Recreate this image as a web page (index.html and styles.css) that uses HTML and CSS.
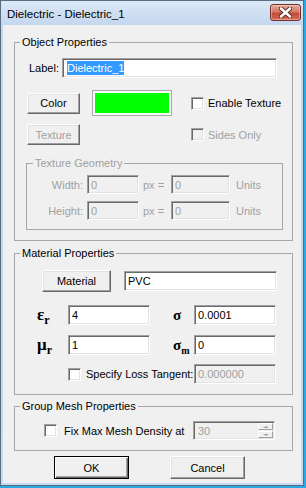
FILE: index.html
```html
<!DOCTYPE html>
<html lang="en">
<head>
  <meta charset="UTF-8" />
  <title>Dielectric - Dielectric_1</title>
  <link rel="stylesheet" href="styles.css">
</head>
<body>
  <div class="window">
    <div class="titlebar">
      <span class="title">Dielectric - Dielectric_1</span>
      <button class="close" aria-label="Close">
        <svg width="13" height="11" viewBox="0 0 13 11">
          <path d="M2 1.5 L11 9.5 M11 1.5 L2 9.5" stroke="#5a231c" stroke-width="4.4" stroke-linecap="round"/>
          <path d="M2 1.5 L11 9.5 M11 1.5 L2 9.5" stroke="#fff" stroke-width="2.6" stroke-linecap="round"/>
        </svg>
      </button>
    </div>

    <div class="client">
      <fieldset class="group">
        <legend>Object Properties</legend>
        <div class="label-row">
          <span class="label-text">Label:</span>
          <div class="field label-field"><span class="sel">Dielectric_1</span></div>
        </div>

        <div class="tex-grid">
          <button class="btn">Color</button>
          <div class="swatch"><div class="swatch-fill"></div></div>
          <label class="check"><input type="checkbox">Enable Texture</label>
          <button class="btn" disabled>Texture</button>
          <span></span>
          <label class="check disabled"><input type="checkbox" disabled>Sides Only</label>
        </div>

        <fieldset class="group geo disabled">
          <legend>Texture Geometry</legend>
          <div class="geo-grid">
            <span class="geo-label">Width:</span>
            <input class="field geo-px" value="0" disabled>
            <span>px =</span>
            <input class="field geo-units" value="0" disabled>
            <span class="units">Units</span>

            <span class="geo-label">Height:</span>
            <input class="field geo-px" value="0" disabled>
            <span>px =</span>
            <input class="field geo-units" value="0" disabled>
            <span class="units">Units</span>
          </div>
        </fieldset>
      </fieldset>

      <fieldset class="group material">
        <legend>Material Properties</legend>
        <div class="mat-row">
          <button class="btn btn-material">Material</button>
          <input class="field mat-name" value="PVC">
        </div>

        <div class="prop-grid">
          <span class="sym">&epsilon;<sub>r</sub></span>
          <input class="field prop" value="4">
          <span class="sym sym-right">&sigma;</span>
          <input class="field prop" value="0.0001">

          <span class="sym">&mu;<sub>r</sub></span>
          <input class="field prop" value="1">
          <span class="sym sym-right">&sigma;<sub>m</sub></span>
          <input class="field prop" value="0">

          <span></span>
          <label class="check loss"><input type="checkbox">Specify Loss Tangent:</label>
          <input class="field prop loss" value="0.000000" disabled>
        </div>
      </fieldset>

      <fieldset class="group mesh">
        <legend>Group Mesh Properties</legend>
        <div class="mesh-row">
          <label class="check mesh-check"><input type="checkbox">Fix Max Mesh Density at</label>
          <div class="spinner">
            <span class="spin-value">30</span>
            <span class="spin-btns">
              <span class="spin-btn"><i class="arrow up"></i></span>
              <span class="spin-btn"><i class="arrow down"></i></span>
            </span>
          </div>
        </div>
      </fieldset>

      <div class="actions">
        <button class="btn btn-action btn-default">OK</button>
        <button class="btn btn-action">Cancel</button>
      </div>
    </div>
  </div>
</body>
</html>
```

FILE: styles.css
```css
html, body {
  margin: 0;
}
body {
  background: #2aa8e2;
  font: 11px "Liberation Sans", Arial, sans-serif;
  color: #000;
}
.window {
  width: 304px;
  height: 486px;
  box-sizing: border-box;
  border: 1px solid #5b6b80;
  padding: 0 2px 2px;
  background: linear-gradient(#dce8f6 0, #c3d7ee 24px, #c5d9f0 100%);
  display: flex;
  flex-direction: column;
}
.titlebar {
  height: 24px;
  display: flex;
  justify-content: space-between;
  padding-left: 4px;
}
.title {
  font-size: 11.5px;
  line-height: 24px;
  margin-top: 1px;
}
.close {
  width: 31px;
  height: 17px;
  margin-top: 3px;
  padding: 0;
  border: 1px solid #70302a;
  border-radius: 3px;
  background: linear-gradient(#e8a898, #d47a68 45%, #c24d3c 55%, #d26a54);
  box-shadow: inset 0 0 0 1px rgba(255, 255, 255, 0.35);
  display: flex;
  align-items: center;
  justify-content: center;
}
.client {
  flex: 1;
  background: #f0f0f0;
  padding: 11px 0 0 11px;
}

/* group boxes */
.group {
  margin: 0;
  padding: 0;
  width: 279px;
  box-sizing: border-box;
  min-inline-size: 0;
  border: 1px solid #a7a7a7;
}
.group legend {
  padding: 0 2px;
  margin-left: 5px;
  line-height: 13px;
}
.group.disabled legend,
.disabled {
  color: #a0a0a0;
}

/* inputs & buttons */
.field {
  box-sizing: border-box;
  height: 20px;
  margin: 0;
  padding: 0 3px;
  font: 11px "Liberation Sans", Arial, sans-serif;
  color: #000;
  background: #fff;
  border: 1px solid;
  border-color: #a0a0a0 #fff #fff #a0a0a0;
  box-shadow: inset 1px 1px #696969, inset -1px -1px #e3e3e3;
  outline: none;
}
.field:disabled {
  background: #f0f0f0;
  color: #a0a0a0;
}
.btn {
  box-sizing: border-box;
  margin: 0;
  padding: 0;
  font: 11px "Liberation Sans", Arial, sans-serif;
  color: #000;
  background: #f0f0f0;
  border: 1px solid;
  border-color: #fff #696969 #696969 #fff;
  box-shadow: inset -1px -1px #a0a0a0, inset 1px 1px #e3e3e3;
}
.btn:disabled {
  color: #a0a0a0;
}
.check {
  display: flex;
  align-items: center;
  gap: 4px;
}
.check input {
  appearance: none;
  width: 13px;
  height: 13px;
  margin: 0;
  background: #fff;
  border: 1px solid;
  border-color: #a0a0a0 #fff #fff #a0a0a0;
  box-shadow: inset 1px 1px #696969, inset -1px -1px #e3e3e3;
}
.check input:disabled {
  background: #f0f0f0;
}

/* object properties */
.label-row {
  display: flex;
  align-items: center;
  margin: 9px 0 0 14px;
}
.label-text {
  width: 33px;
}
.label-field {
  width: 215px;
  display: flex;
  align-items: center;
  padding-left: 4px;
}
.sel {
  background: #3399ff;
  color: #fff;
  line-height: 14px;
}
.tex-grid {
  display: grid;
  grid-template-columns: 53px 80px 1fr;
  grid-template-rows: 26px 21px;
  column-gap: 12px;
  row-gap: 8px;
  align-items: center;
  margin: 12px 0 0 12px;
}
.tex-grid .btn {
  height: 21px;
}
.tex-grid .check {
  margin-left: 7px;
}
.swatch {
  box-sizing: border-box;
  height: 26px;
  padding: 2px;
  border: 1px solid #a9a9a9;
  background: #f7f7f7;
}
.swatch-fill {
  height: 100%;
  background: #00ff00;
}
.geo {
  width: 257px;
  margin: 12px 0 10px 11px;
}
.geo legend {
  margin-left: 6px;
}
.geo-grid {
  display: grid;
  grid-template-columns: 56px 52px 24px 59px auto;
  grid-template-rows: 19px 19px;
  column-gap: 4px;
  row-gap: 7px;
  align-items: center;
  margin: 5px 0 9px;
}
.geo-grid .field {
  height: 19px;
  width: 100%;
}
.geo-label {
  text-align: right;
}
.units {
  margin-left: 2px;
}

/* material properties */
.material {
  margin-top: 6px;
}
.mat-row {
  display: flex;
  align-items: center;
  margin: 10px 0 0 27px;
}
.btn-material {
  width: 69px;
  height: 22px;
}
.mat-name {
  width: 153px;
  margin-left: 13px;
}
.prop-grid {
  display: grid;
  grid-template-columns: 31px 82px 44px 82px;
  grid-auto-rows: 20px;
  row-gap: 10px;
  align-items: center;
  margin: 13px 0 9px 22px;
}
.prop {
  width: 82px;
}
.sym {
  font: bold 17px "Liberation Serif", "DejaVu Serif", serif;
  line-height: 20px;
}
.sym sub {
  font-size: 12px;
  vertical-align: -4px;
  line-height: 0;
}
.sym-right {
  padding-left: 23px;
  font-size: 15px;
}
.sym-right sub {
  font-size: 10px;
}
.loss {
  margin-top: -2px;
}
.check.loss {
  grid-column: span 2;
  gap: 5px;
}

/* mesh */
.mesh {
  margin-top: 5px;
}
.mesh-row {
  display: flex;
  align-items: center;
  height: 19px;
  margin: 8px 17px 10px 29px;
}
.mesh-check {
  gap: 7px;
}
.spinner {
  margin-left: auto;
  box-sizing: border-box;
  width: 82px;
  height: 19px;
  display: flex;
  align-items: center;
  justify-content: space-between;
  padding: 0 1px 0 4px;
  color: #a0a0a0;
  background: #f0f0f0;
  border: 1px solid;
  border-color: #a0a0a0 #fff #fff #a0a0a0;
  box-shadow: inset 1px 1px #696969, inset -1px -1px #e3e3e3;
}
.spin-btns {
  display: flex;
  flex-direction: column;
  gap: 1px;
}
.spin-btn {
  box-sizing: border-box;
  width: 15px;
  height: 7px;
  display: flex;
  align-items: center;
  justify-content: center;
  background: #f0f0f0;
  border: 1px solid;
  border-color: #fff #a0a0a0 #a0a0a0 #fff;
}
.arrow {
  width: 0;
  height: 0;
  border-left: 3px solid transparent;
  border-right: 3px solid transparent;
}
.arrow.up {
  border-bottom: 2px solid #a0a0a0;
}
.arrow.down {
  border-top: 2px solid #a0a0a0;
}

/* dialog buttons */
.actions {
  display: flex;
  gap: 41px;
  margin: 5px 0 0 40px;
}
.btn-action {
  width: 75px;
  height: 23px;
}
.btn-default {
  border-color: #000;
  box-shadow: inset 1px 1px #fff, inset -1px -1px #696969, inset -2px -2px #a0a0a0;
}
```
